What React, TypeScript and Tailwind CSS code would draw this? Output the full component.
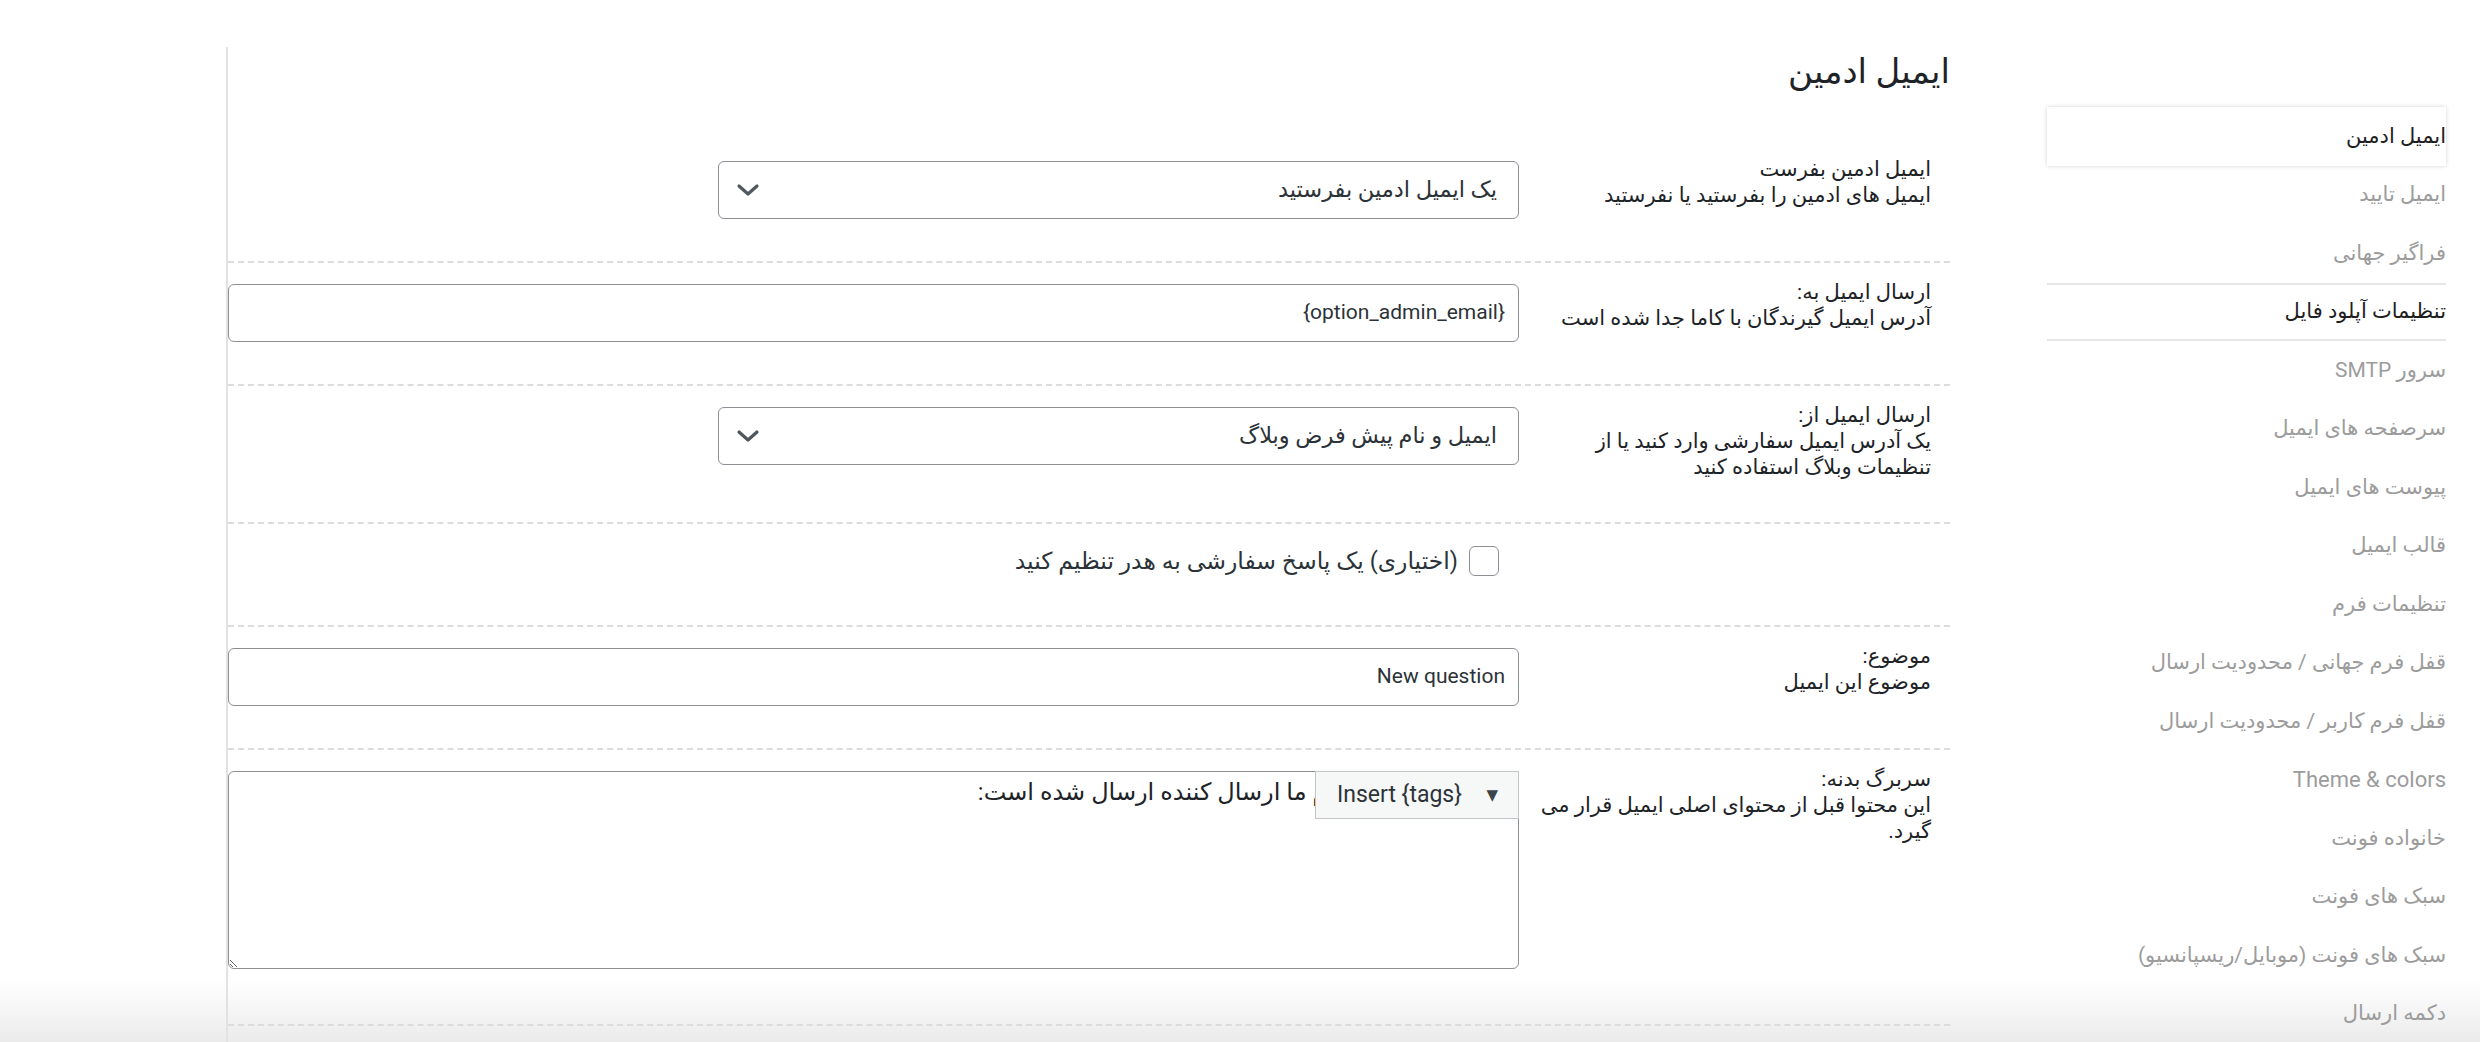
import React from "react";

const sideItems = [
  { label: "ایمیل ادمین", kind: "active" },
  { label: "ایمیل تایید", kind: "muted" },
  { label: "فراگیر جهانی", kind: "muted" },
  { label: "تنظیمات آپلود فایل", kind: "section" },
  { label: "سرور SMTP", kind: "muted" },
  { label: "سرصفحه های ایمیل", kind: "muted" },
  { label: "پیوست های ایمیل", kind: "muted" },
  { label: "قالب ایمیل", kind: "muted" },
  { label: "تنظیمات فرم", kind: "muted" },
  { label: "قفل فرم جهانی / محدودیت ارسال", kind: "muted" },
  { label: "قفل فرم کاربر / محدودیت ارسال", kind: "muted" },
  { label: "Theme & colors", kind: "latin" },
  { label: "خانواده فونت", kind: "muted" },
  { label: "سبک های فونت", kind: "muted" },
  { label: "سبک های فونت (موبایل/ریسپانسیو)", kind: "muted" },
  { label: "دکمه ارسال", kind: "muted" },
];

function Chevron() {
  return (
    <svg width="24" height="14" viewBox="0 0 24 14" fill="none">
      <path d="M3 3 L12 11 L21 3" stroke="#50575e" strokeWidth="3.2" strokeLinecap="round" strokeLinejoin="round" />
    </svg>
  );
}

function FieldLabel({ title, desc }: { title: string; desc: React.ReactNode }) {
  return (
    <div className="w-[411px] shrink-0 pr-[19px] text-[21px] leading-[26px] whitespace-nowrap text-[#1d2327]">
      <div>{title}</div>
      <div>{desc}</div>
    </div>
  );
}

function SelectBox({ value }: { value: string }) {
  return (
    <div className="mt-[5px] flex h-[58px] w-[801px] items-center justify-between rounded-[6px] border-[1.5px] border-[#8c8f94] bg-white pr-[21px] pl-[17px] text-[22.5px] text-[#2c3338]">
      <span>{value}</span>
      <Chevron />
    </div>
  );
}

function TextInput({ value }: { value: string }) {
  return (
    <div className="mt-[5px] flex h-[58px] w-full items-center rounded-[6px] border-[1.5px] border-[#8c8f94] bg-white pr-[13px] text-[21px] text-[#2c3338]">
      <span>{value}</span>
    </div>
  );
}

export default function App() {
  return (
    <div
      dir="rtl"
      className="relative min-h-screen overflow-hidden bg-[linear-gradient(to_bottom,#ffffff_0px,#ffffff_980px,#ebebeb_1042px)] font-[Roboto,'DejaVu_Sans',sans-serif] text-[#1d2327]"
    >
      <div className="flex items-start pr-[34px]">
        {/* Sidebar */}
        <aside className="w-[399px] shrink-0 pt-[107px]">
          {sideItems.map((item) => (
            <div
              key={item.label}
              className={
                item.kind === "active"
                  ? "flex h-[58.5px] items-center bg-white text-[21px] text-[#1e1e1e] shadow-[0_0_4px_rgba(0,0,0,0.18)]"
                  : item.kind === "section"
                  ? "flex h-[58.5px] items-center border-y-2 border-[#e6e6e6] text-[21px] text-[#1e1e1e]"
                  : item.kind === "latin"
                  ? "flex h-[58.5px] items-center text-[22px] text-[#9c9c9c]"
                  : "flex h-[58.5px] items-center text-[21px] text-[#9c9c9c]"
              }
            >
              {item.label}
            </div>
          ))}
        </aside>

        {/* Main panel */}
        <main className="mr-[97px] mt-[47px] min-h-[995px] w-[1724px] shrink-0 border-l-2 border-[#e2e2e2] pt-[4px]">
          <h2 className="mb-[49px] text-[34px] leading-[40px] text-[#1d2327]">ایمیل ادمین</h2>

          {/* Row 1 */}
          <div className="flex gap-[20px] border-b-2 border-dashed border-[#dcdcde] pt-[16px] pb-[42px]">
            <FieldLabel title="ایمیل ادمین بفرست" desc="ایمیل های ادمین را بفرستید یا نفرستید" />
            <div className="flex-1">
              <SelectBox value="یک ایمیل ادمین بفرستید" />
            </div>
          </div>

          {/* Row 2 */}
          <div className="flex gap-[20px] border-b-2 border-dashed border-[#dcdcde] pt-[16px] pb-[42px]">
            <FieldLabel title="ارسال ایمیل به:" desc="آدرس ایمیل گیرندگان با کاما جدا شده است" />
            <div className="flex-1">
              <TextInput value="{option_admin_email}" />
            </div>
          </div>

          {/* Row 3 */}
          <div className="flex gap-[20px] border-b-2 border-dashed border-[#dcdcde] pt-[16px] pb-[42px]">
            <FieldLabel
              title="ارسال ایمیل از:"
              desc={
                <>
                  یک آدرس ایمیل سفارشی وارد کنید یا از
                  <br />
                  تنظیمات وبلاگ استفاده کنید
                </>
              }
            />
            <div className="flex-1">
              <SelectBox value="ایمیل و نام پیش فرض وبلاگ" />
            </div>
          </div>

          {/* Row 4 */}
          <div className="flex gap-[20px] border-b-2 border-dashed border-[#dcdcde] pt-[22px] pb-[49px]">
            <div className="w-[411px] shrink-0" />
            <div className="flex h-[30px] flex-1 items-center gap-[11px] pr-[20px]">
              <span className="h-[30px] w-[30px] shrink-0 rounded-[6px] border-[1.5px] border-[#8c8f94] bg-white" />
              <span className="text-[23.5px] leading-[30px] text-[#2c3338]">(اختیاری) یک پاسخ سفارشی به هدر تنظیم کنید</span>
            </div>
          </div>

          {/* Row 5 */}
          <div className="flex gap-[20px] border-b-2 border-dashed border-[#dcdcde] pt-[16px] pb-[42px]">
            <FieldLabel title="موضوع:" desc="موضوع این ایمیل" />
            <div className="flex-1">
              <TextInput value="New question" />
            </div>
          </div>

          {/* Row 6 */}
          <div className="flex gap-[20px] border-b-2 border-dashed border-[#dcdcde] pt-[16px] pb-[55px]">
            <FieldLabel
              title="سربرگ بدنه:"
              desc={
                <>
                  این محتوا قبل از محتوای اصلی ایمیل قرار می
                  <br />
                  گیرد.
                </>
              }
            />
            <div className="relative mt-[5px] flex-1">
              <textarea
                dir="rtl"
                readOnly
                defaultValue="اطلاعات زیر در فرم ما ارسال کننده ارسال شده است:"
                className="block h-[198px] w-full rounded-[6px] border-[1.5px] border-[#8c8f94] bg-white px-[10px] py-[4px] text-[24px] leading-[32px] text-[#1d2327] outline-none"
              />
              <div
                dir="ltr"
                className="absolute top-0 right-0 flex h-[48px] w-[204px] items-center justify-between border-[1.5px] border-[#c3c4c7] bg-[#f6f7f7] pl-[21px] pr-[20px] text-[23px] text-[#2c3338]"
              >
                <span>Insert {"{tags}"}</span>
                <span className="text-[15px] text-[#3c434a]">▼</span>
              </div>
            </div>
          </div>
        </main>
      </div>
    </div>
  );
}
